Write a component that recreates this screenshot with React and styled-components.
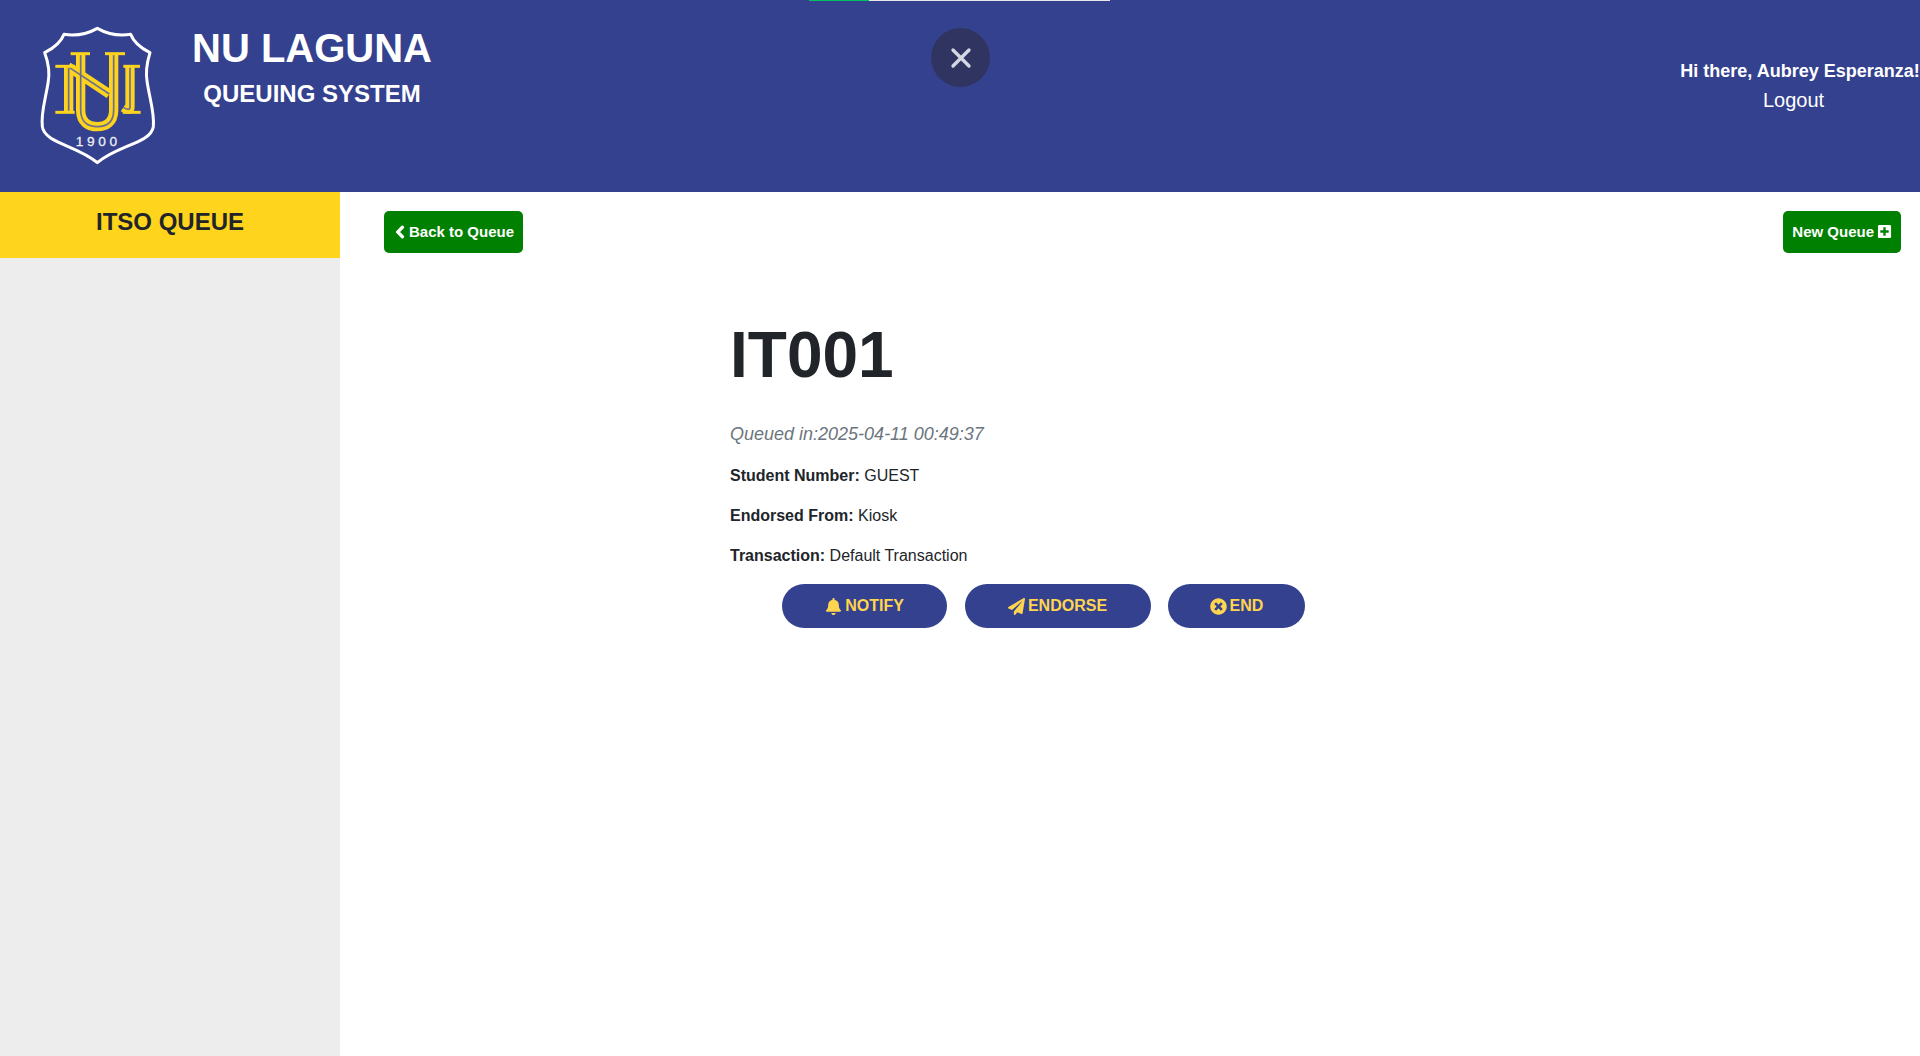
import React from "react";
import styled, { createGlobalStyle } from "styled-components";
import { FaChevronLeft, FaPlusSquare, FaBell, FaPaperPlane, FaTimesCircle } from "react-icons/fa";
import { X } from "lucide-react";

const Global = createGlobalStyle`
  html, body { margin: 0; padding: 0; background: #fff; }
  body { font-family: "Liberation Sans", Arial, sans-serif; color: #212529; font-size: 16px; line-height: 1.5; }
  * { box-sizing: border-box; }
`;

const Page = styled.div`
  width: 1920px;
  height: 1056px;
  overflow: hidden;
  position: relative;
  display: flex;
  flex-direction: column;
`;

const Header = styled.header`
  height: 192px;
  background: #34418e;
  display: flex;
  align-items: flex-start;
  justify-content: space-between;
  color: #fff;
  flex: none;
`;

const BrandGroup = styled.div`
  display: flex;
  align-items: flex-start;
`;

const LogoWrap = styled.div`
  padding: 20px 0 0 30px;
  line-height: 0;
`;

const Brand = styled.div`
  margin: 24px 0 0 22px;
  display: flex;
  flex-direction: column;
  align-items: center;
  width: 240px;
`;

const BrandTitle = styled.h1`
  margin: 0;
  font-size: 40px;
  line-height: 48px;
  font-weight: 700;
  white-space: nowrap;
`;

const BrandSub = styled.h2`
  margin: 7px 0 0;
  font-size: 24px;
  line-height: 29px;
  font-weight: 700;
  white-space: nowrap;
`;

const UserBox = styled.div`
  width: 240px;
  margin-top: 58px;
  text-align: center;
`;

const Greeting = styled.div`
  font-size: 18px;
  line-height: 27px;
  font-weight: 700;
  white-space: nowrap;
`;

const Logout = styled.a`
  display: block;
  font-size: 20px;
  line-height: 30px;
  color: #fff;
  padding-right: 13px;
`;

const ToastBar = styled.div`
  position: absolute;
  left: 809px;
  top: 0;
  width: 301px;
  height: 1px;
  background: #e8e8e8;
`;

const ToastFill = styled.div`
  width: 60px;
  height: 100%;
  background: #00c060;
`;

const CloseButton = styled.button`
  position: absolute;
  left: 931px;
  top: 28px;
  width: 59px;
  height: 59px;
  border-radius: 50%;
  border: none;
  background: #2f3560;
  color: #d5d7e2;
  display: flex;
  align-items: center;
  justify-content: center;
  padding: 0;
`;

const Body = styled.div`
  flex: 1;
  display: flex;
`;

const Sidebar = styled.aside`
  width: 340px;
  background: #ededed;
  flex: none;
`;

const SidebarTitle = styled.div`
  height: 66px;
  background: #ffd41c;
  text-align: center;
  font-size: 24px;
  line-height: 29px;
  font-weight: 700;
  color: #212529;
  padding-top: 15px;
`;

const Main = styled.main`
  flex: 1;
  padding: 19px 19px 0 44px;
`;

const Toolbar = styled.div`
  display: flex;
  justify-content: space-between;
`;

const GreenButton = styled.button`
  height: 42px;
  background: #008000;
  color: #fff;
  border: none;
  border-radius: 5px;
  padding: 0 9px 1px;
  font: 700 15px "Liberation Sans", Arial, sans-serif;
  display: flex;
  align-items: center;
  gap: 3px;
`;

const BackIcon = styled(FaChevronLeft)`
  font-size: 14px;
  stroke: currentColor;
  stroke-width: 40px;
  margin-right: -1px;
`;

const PlusIcon = styled(FaPlusSquare)`
  font-size: 15px;
`;

const Details = styled.section`
  margin: 64px 0 0 346px;
`;

const Ticket = styled.h1`
  margin: 0 0 27px;
  font-size: 64px;
  line-height: 77px;
  font-weight: 700;
  color: #212529;
`;

const Queued = styled.p`
  margin: 0 0 16px;
  font-size: 18px;
  line-height: 27px;
  font-style: italic;
  color: #6c757d;
`;

const Info = styled.p`
  margin: 0 0 16px;
  color: #212529;
  b { font-weight: 700; }
`;

const Actions = styled.div`
  display: flex;
  gap: 17.5px;
  margin: 0 0 0 52px;
`;

const Pill = styled.button`
  height: 44px;
  width: ${(p) => p.$w}px;
  border: none;
  border-radius: 22px;
  background: #34418e;
  color: #ffd54f;
  font: 700 16px "Liberation Sans", Arial, sans-serif;
  display: flex;
  align-items: center;
  justify-content: center;
  gap: 3px;
  padding: 0;
  svg { font-size: 17px; }
`;

function Logo() {
  const yellow = "#fdd31f";
  const inline = "#6a6f8f";
  const shapes = [
    "M116 140 V275",
    "M114 140 L238 222",
    "M152 102 V270 C152 308 176 320 202 320 C228 320 251 308 251 270 V102",
    "M300 140 V262 C300 270 292 270 280 262",
  ];
  const serifs = [
    "M76 139 H136", "M76 277 H134",
    "M122 101 H180", "M225 101 H285",
    "M280 139 H330", "M278 277 H332",
  ];
  return (
    <svg width="140" height="150" viewBox="0 0 420 450">
      <path
        d="M202 25 C172 42 140 49 102 43 C92 68 72 84 44 98 C56 130 60 160 54 190 C46 240 32 280 37 320 C44 370 140 375 202 428 C264 375 362 370 370 320 C374 280 360 240 352 190 C346 160 350 130 360 98 C332 84 312 68 302 43 C264 49 232 42 202 25 Z"
        fill="none"
        stroke="#fff"
        strokeWidth="9"
        strokeLinejoin="round"
      />
      {shapes.map((d) => (
        <path key={d} d={d} fill="none" stroke={yellow} strokeWidth="28" />
      ))}
      {shapes.map((d) => (
        <path key={`i${d}`} d={d} fill="none" stroke={inline} strokeWidth="5" />
      ))}
      {serifs.map((d) => (
        <path key={d} d={d} fill="none" stroke={yellow} strokeWidth="9" />
      ))}
      <text
        x="205"
        y="378"
        textAnchor="middle"
        fill="#eef0f7"
        stroke="#eef0f7"
        strokeWidth="0.8"
        fontFamily="'Liberation Sans', Arial, sans-serif"
        fontSize="41"
        letterSpacing="11"
      >
        1900
      </text>
    </svg>
  );
}

export default function App() {
  return (
    <Page>
      <Global />
      <Header>
        <BrandGroup>
          <LogoWrap>
            <Logo />
          </LogoWrap>
          <Brand>
            <BrandTitle>NU LAGUNA</BrandTitle>
            <BrandSub>QUEUING SYSTEM</BrandSub>
          </Brand>
        </BrandGroup>
        <UserBox>
          <Greeting>Hi there, Aubrey Esperanza!</Greeting>
          <Logout>Logout</Logout>
        </UserBox>
      </Header>
      <ToastBar>
        <ToastFill />
      </ToastBar>
      <CloseButton aria-label="Close">
        <X size={32} strokeWidth={2.5} />
      </CloseButton>
      <Body>
        <Sidebar>
          <SidebarTitle>ITSO QUEUE</SidebarTitle>
        </Sidebar>
        <Main>
          <Toolbar>
            <GreenButton>
              <BackIcon />
              Back to Queue
            </GreenButton>
            <GreenButton>
              New Queue
              <PlusIcon />
            </GreenButton>
          </Toolbar>
          <Details>
            <Ticket>IT001</Ticket>
            <Queued>Queued in:2025-04-11 00:49:37</Queued>
            <Info>
              <b>Student Number:</b> GUEST
            </Info>
            <Info>
              <b>Endorsed From:</b> Kiosk
            </Info>
            <Info>
              <b>Transaction:</b> Default Transaction
            </Info>
            <Actions>
              <Pill $w={165}>
                <FaBell />
                NOTIFY
              </Pill>
              <Pill $w={186}>
                <FaPaperPlane />
                ENDORSE
              </Pill>
              <Pill $w={137}>
                <FaTimesCircle />
                END
              </Pill>
            </Actions>
          </Details>
        </Main>
      </Body>
    </Page>
  );
}
